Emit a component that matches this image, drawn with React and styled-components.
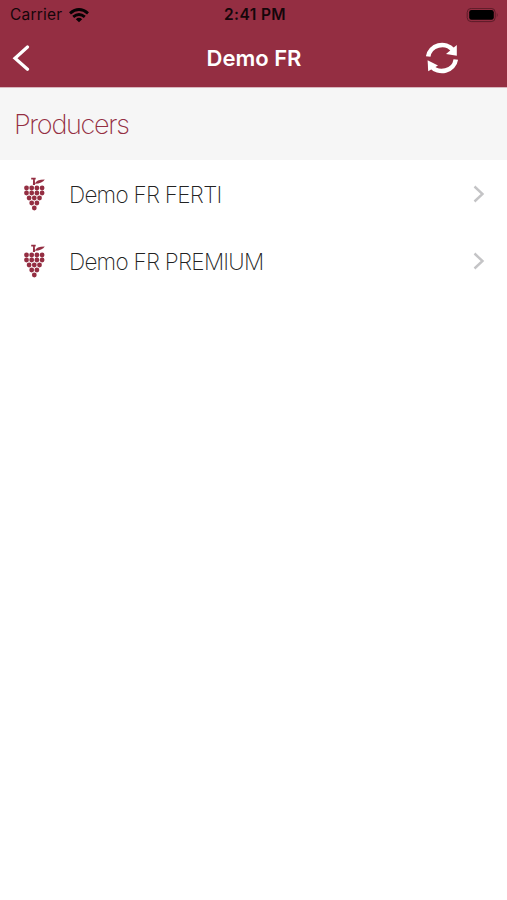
import React from 'react';
import styled, { createGlobalStyle } from 'styled-components';

const GlobalStyle = createGlobalStyle`
    * {
        box-sizing: border-box;
    }

    body {
        margin: 0;
        background-color: #fff;
        font-family: Inter, 'Liberation Sans', sans-serif;
    }
`;

const Screen = styled.div`
    min-height: 100vh;
    background-color: #fff;
`;

const Header = styled.header`
    height: 88px;
    background-color: #942e42;
    border-bottom: 1px solid #d9b7be;
`;

const StatusBar = styled.div`
    display: grid;
    grid-template-columns: 1fr auto 1fr;
    align-items: center;
    height: 30px;
    padding: 0 8px 0 10px;
    color: #14060a;
    font-size: 15.5px;
    line-height: 30px;
`;

const Carrier = styled.div`
    display: flex;
    align-items: center;
    gap: 7px;
    letter-spacing: 0.2px;
`;

const Time = styled.div`
    margin-right: -1px;
    font-weight: 600;
    letter-spacing: 0.4px;
`;

const BatteryIcon = styled.svg`
    display: block;
    justify-self: end;
`;

const NavBar = styled.div`
    display: grid;
    grid-template-columns: 1fr auto 1fr;
    align-items: center;
    height: 57px;
    padding: 0 47px 2px 12px;
`;

const IconButton = styled.button`
    display: flex;
    justify-self: ${({ $end }) => ($end ? 'end' : 'start')};
    padding: 0;
    border: 0;
    background: none;
    color: #fff;
`;

const Title = styled.h1`
    margin: 0 -36px 0 0;
    color: #fff;
    font-size: 22px;
    font-weight: 600;
    line-height: 28px;
    letter-spacing: 0;
`;

const SectionTitle = styled.h2`
    height: 72px;
    margin: 0;
    padding: 0 14px;
    background-color: #f6f6f6;
    color: #942e42;
    font-size: 27px;
    font-weight: 200;
    line-height: 73px;
    letter-spacing: -1.3px;
`;

const List = styled.ul`
    margin: 0;
    padding: 0;
    list-style: none;
`;

const Row = styled.li`
    display: flex;
    align-items: center;
    height: 67px;
    padding: 0 22px 0 22px;
`;

const Name = styled.span`
    flex: 1;
    padding-top: 2px;
    margin-left: 21px;
    color: #222;
    font-size: 22.5px;
    font-weight: 200;
    line-height: 30px;
    letter-spacing: -0.73px;
`;

const producers = ['Demo FR FERTI', 'Demo FR PREMIUM'];

const berryRows = [
    { y: 13, xs: [4.5, 9.7, 14.9, 20.1] },
    { y: 18, xs: [4.5, 9.7, 14.9, 20.1] },
    { y: 23, xs: [7.1, 12.3, 17.5] },
    { y: 28, xs: [9.7, 14.9] },
    { y: 33, xs: [12.3] }
];

const Grape = () => (
    <svg width="26" height="38" viewBox="0 0 26 38" fill="#942e42">
        <path d="M9.200 2.800h4.500v1.600h-.9l.3 5.600h-2.200l.2-5.600H9.200z" />
        <path d="M12.800 8.800q1.400-4.400 10-4.400-2.400 3.800-10 4.400z" />
        {berryRows.map(({ y, xs }) => xs.map((x) => <circle key={`${x}-${y}`} cx={x} cy={y} r="2.4" />))}
    </svg>
);

const Wifi = () => (
    <svg width="20" height="15" viewBox="0 0 20 15" fill="none" stroke="#080204" strokeWidth="2.9">
        <path d="M1 5.400Q10-2.200 19 5.400" />
        <path d="M4.200 8.900Q10 4.200 15.800 8.900" />
        <path d="M10 14.200L6.800 11.200Q10 8.500 13.200 11.200z" fill="#080204" stroke="none" />
    </svg>
);

const Battery = () => (
    <BatteryIcon width="33" height="15" viewBox="0 0 33 15">
        <rect x="1.2" y=".4" width="28" height="13.2" rx="4" fill="none" stroke="#5c1b28" strokeWidth="1" />
        <rect x="3.2" y="2" width="24.6" height="9.8" rx="2.3" fill="#000" />
        <path d="M30.800 4.500q1.800 2.500 0 5z" fill="#5c1b28" />
    </BatteryIcon>
);

const Back = () => (
    <svg width="18" height="26" viewBox="0 0 18 26" fill="none" stroke="currentColor" strokeWidth="3.2">
        <path d="M15.500 2L3 13.200l12.500 11" strokeLinecap="round" />
    </svg>
);

const Refresh = () => (
    <svg width="36" height="34" viewBox="0 0 36 34" fill="none" stroke="currentColor" strokeWidth="4.6">
        <path d="M4.200 15.500A14 13.400 0 0 1 29 9" />
        <path d="M31.800 18.500A14 13.400 0 0 1 7 25" />
        <path d="M32.800 4v10.800l-10.800-1.800z" fill="currentColor" stroke="none" />
        <path d="M4.200 30.200l-.6-11 10.400 5.300z" fill="currentColor" stroke="none" />
    </svg>
);

const Chevron = () => (
    <svg width="12" height="18" viewBox="0 0 12 18" fill="none" stroke="#c4c4c6" strokeWidth="2.4">
        <path d="M1.500 1.500L9.500 9l-8 7.500" />
    </svg>
);

const App = () => {
    return (
        <Screen>
            <GlobalStyle />
            <Header>
                <StatusBar>
                    <Carrier>
                        Carrier
                        <Wifi />
                    </Carrier>
                    <Time>2:41 PM</Time>
                    <Battery />
                </StatusBar>
                <NavBar>
                    <IconButton aria-label="Back">
                        <Back />
                    </IconButton>
                    <Title>Demo FR</Title>
                    <IconButton $end aria-label="Refresh">
                        <Refresh />
                    </IconButton>
                </NavBar>
            </Header>
            <SectionTitle>Producers</SectionTitle>
            <List>
                {producers.map((name) => (
                    <Row key={name}>
                        <Grape />
                        <Name>{name}</Name>
                        <Chevron />
                    </Row>
                ))}
            </List>
        </Screen>
    );
};

export default App;
